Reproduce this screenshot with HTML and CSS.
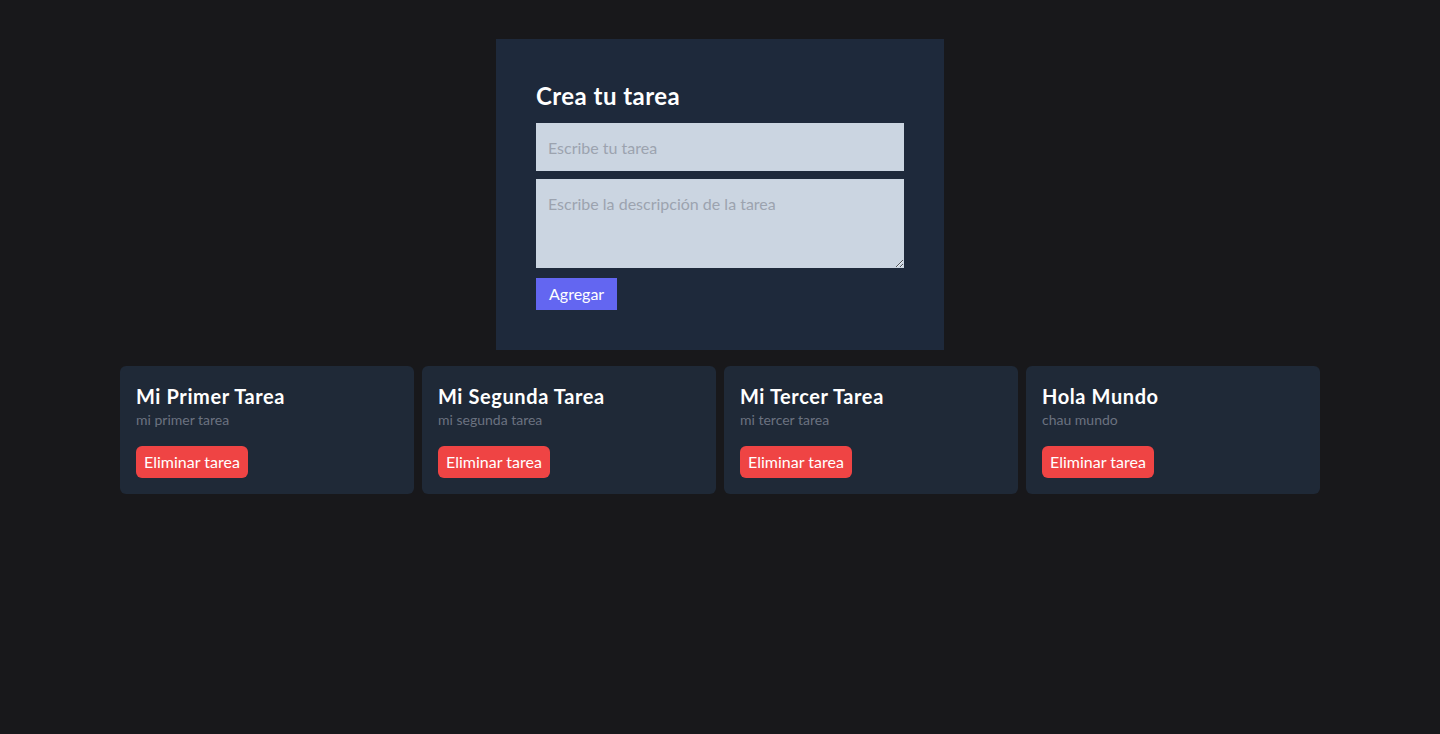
FILE: index.html
```html
<!DOCTYPE html>
<html lang="es">
<head>
<meta charset="utf-8">
<title>Tareas</title>
<link rel="stylesheet" href="styles.css">
</head>
<body>
<main class="page">
  <form class="task-form">
    <h1 class="form-title">Crea tu tarea</h1>
    <input class="field" type="text" placeholder="Escribe tu tarea">
    <textarea class="field area" placeholder="Escribe la descripción de la tarea"></textarea>
    <button class="add-btn" type="button">Agregar</button>
  </form>
  <section class="grid">
    <article class="card">
      <h2 class="card-title">Mi Primer Tarea</h2>
      <p class="card-desc">mi primer tarea</p>
      <button class="del-btn" type="button">Eliminar tarea</button>
    </article>
    <article class="card">
      <h2 class="card-title">Mi Segunda Tarea</h2>
      <p class="card-desc">mi segunda tarea</p>
      <button class="del-btn" type="button">Eliminar tarea</button>
    </article>
    <article class="card">
      <h2 class="card-title">Mi Tercer Tarea</h2>
      <p class="card-desc">mi tercer tarea</p>
      <button class="del-btn" type="button">Eliminar tarea</button>
    </article>
    <article class="card">
      <h2 class="card-title">Hola Mundo</h2>
      <p class="card-desc">chau mundo</p>
      <button class="del-btn" type="button">Eliminar tarea</button>
    </article>
  </section>
</main>
</body>
</html>
```
FILE: styles.css
```css
* { box-sizing: border-box; }
html, body { margin: 0; padding: 0; }
body {
  background: #18181b;
  font-family: "Lato", "Noto Sans", sans-serif;
  color: #fff;
  min-height: 734px;
}
.page {
  width: 1280px;
  margin: 0 auto;
  padding: 39px 40px 0;
}
.task-form {
  width: 448px;
  margin: 0 auto;
  background: #1e293b;
  padding: 40px;
  display: flex;
  flex-direction: column;
  align-items: flex-start;
}
.form-title {
  margin: 0 0 12px;
  font-size: 24px;
  line-height: 34px;
  height: 32px;
  font-weight: 700;
  letter-spacing: 0.45px;
}
.field {
  width: 100%;
  background: #cbd5e1;
  border: none;
  outline: none;
  padding: 12px;
  font-family: inherit;
  font-size: 16px;
  line-height: 24px;
  height: 48px;
  color: #111;
  margin: 0 0 8px;
  display: block;
}
.field::placeholder { color: #9ca3af; }
.area {
  height: 89px;
  resize: vertical;
  margin-bottom: 10px;
  padding-top: 13px;
}
.add-btn {
  background: #6366f1;
  color: #fff;
  border: none;
  font-family: inherit;
  font-size: 16px;
  line-height: 24px;
  padding: 4px 13px;
  height: 32px;
}
.grid {
  margin-top: 16px;
  display: grid;
  grid-template-columns: repeat(4, 1fr);
  gap: 8px;
}
.card {
  background: #1f2937;
  border-radius: 6px;
  padding: 16px;
}
.card-title {
  margin: 0;
  font-size: 20px;
  line-height: 29px;
  height: 28px;
  font-weight: 700;
  letter-spacing: 0.6px;
}
.card-desc {
  margin: 0 0 16px;
  font-size: 14px;
  line-height: 20px;
  height: 20px;
  color: #6b7280;
}
.del-btn {
  background: #ef4444;
  color: #fff;
  border: none;
  border-radius: 6px;
  font-family: inherit;
  font-size: 16px;
  line-height: 24px;
  padding: 4px 8px;
  height: 32px;
}
```
